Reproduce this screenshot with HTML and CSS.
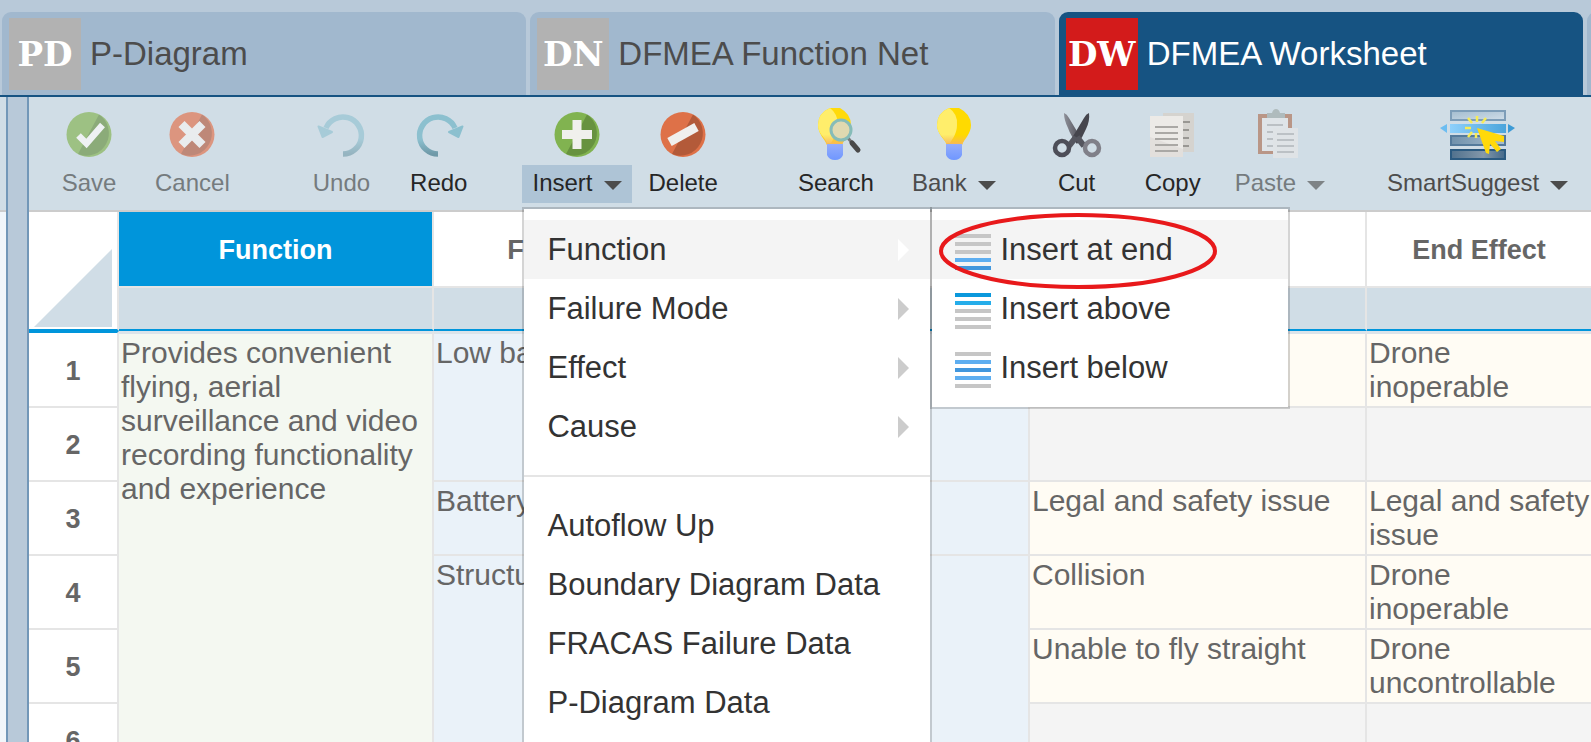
FILE: index.html
```html
<!DOCTYPE html>
<html lang="en">
<head>
<meta charset="utf-8">
<title>DFMEA Worksheet</title>
<link rel="stylesheet" href="styles.css">
</head>
<body>
<svg class="defs" width="0" height="0" aria-hidden="true">
  <defs>
    <linearGradient id="bulb" x1="0" y1="0" x2="1" y2="0"><stop offset="0" stop-color="#ffe94d"/><stop offset="1" stop-color="#ffd400"/></linearGradient>
    <linearGradient id="bulbFade" x1="0" y1="0" x2="0" y2="1"><stop offset=".72" stop-color="#f7b955" stop-opacity="0"/><stop offset="1" stop-color="#f7b560"/></linearGradient>
    <linearGradient id="base" x1="0" y1="0" x2="0" y2="1"><stop offset="0" stop-color="#95adfb"/><stop offset="1" stop-color="#6f97ff"/></linearGradient>
    <linearGradient id="arc" x1="0" y1="0" x2="0" y2="1"><stop offset=".6" stop-color="#8cc0cf"/><stop offset="1" stop-color="#6f99a8"/></linearGradient>
    <linearGradient id="blade" x1="0" y1="0" x2="1" y2="0"><stop offset="0" stop-color="#8e9099"/><stop offset="1" stop-color="#4c4c55"/></linearGradient>
    <linearGradient id="bar1" x1="0" y1="0" x2="1" y2="1"><stop offset="0" stop-color="#a3bccf"/><stop offset="1" stop-color="#cfdde8"/></linearGradient>
    <linearGradient id="bar2" x1="0" y1="0" x2="1" y2="0"><stop offset="0" stop-color="#8ed0fb"/><stop offset="1" stop-color="#4ba5dc"/></linearGradient>
    <linearGradient id="bar3" x1="0" y1="0" x2="1" y2="0"><stop offset="0" stop-color="#6f90ab"/><stop offset="1" stop-color="#a9bfd0"/></linearGradient>
    <linearGradient id="bar4" x1="0" y1="0" x2="1" y2="0"><stop offset="0" stop-color="#50718d"/><stop offset=".6" stop-color="#8398aa"/><stop offset="1" stop-color="#44698a"/></linearGradient>
  </defs>
</svg>
<div class="app">
  <nav class="tabs">
    <a class="tab" href="#pd"><span class="badge">PD</span>P-Diagram</a>
    <a class="tab" href="#dn"><span class="badge">DN</span>DFMEA Function Net</a>
    <a class="tab current" href="#dw"><span class="badge">DW</span>DFMEA Worksheet</a>
    <span class="tab"></span>
  </nav>

  <div class="body">
    <aside class="side"><div class="side-bar"></div></aside>
    <div class="splitter"></div>
    <main class="main">
      <div class="toolbar">
        <div class="group">
          <button class="tool disabled">
            <svg class="icon" viewBox="0 0 76 56"><circle cx="38" cy="28.500" r="22.500" fill="#9dc183"/><path d="M48 8.500A22.500 22.500 0 0 1 27 48Z" fill="#8bab79"/><path d="M27.500 29.500l8 8 16-18.500" fill="none" stroke="#eef1f3" stroke-width="6.500"/></svg>
            <span class="label">Save</span>
          </button>
          <button class="tool disabled">
            <svg class="icon" viewBox="0 0 76 56"><circle cx="38" cy="28.500" r="22.500" fill="#dc957f"/><path d="M48 8.500A22.500 22.500 0 0 1 27 48Z" fill="#be8878"/><path d="M27.500 18l21 21m0-21l-21 21" stroke="#e9ecee" stroke-width="8.500"/></svg>
            <span class="label">Cancel</span>
          </button>
        </div>
        <div class="group history">
          <button class="tool disabled">
            <svg class="icon" viewBox="0 0 76 56" opacity=".6"><g transform="matrix(-1 0 0 1 77 0)"><path d="M37 48A18.500 18.500 0 1 1 54 22" fill="none" stroke="url(#arc)" stroke-width="5.500"/><path d="M48 26L61.500 20.500 57.500 31Z" fill="#8cc0cf" stroke="#8cc0cf" stroke-width="2" stroke-linejoin="round"/></g></svg>
            <span class="label">Undo</span>
          </button>
          <button class="tool">
            <svg class="icon" viewBox="0 0 76 56"><path d="M37 48A18.500 18.500 0 1 1 54 22" fill="none" stroke="url(#arc)" stroke-width="5.500"/><path d="M48 26L61.500 20.500 57.500 31Z" fill="#8cc0cf" stroke="#8cc0cf" stroke-width="2" stroke-linejoin="round"/></svg>
            <span class="label">Redo</span>
          </button>
        </div>
        <div class="group edit">
          <div class="dropdown">
            <button class="tool open" aria-expanded="true">
              <svg class="icon" viewBox="0 0 76 56"><circle cx="38" cy="28.500" r="22.500" fill="#81b350"/><path d="M48 8.500A22.500 22.500 0 0 1 27 48Z" fill="#67923f"/><path d="M38 14v29M23 28.500h30" stroke="#f0f0ec" stroke-width="9"/></svg>
              <span class="label">Insert<i class="caret"></i></span>
            </button>
            <div class="menu">
              <button class="item hover">Function<i class="arrow"></i></button>
              <button class="item">Failure Mode<i class="arrow"></i></button>
              <button class="item">Effect<i class="arrow"></i></button>
              <button class="item">Cause<i class="arrow"></i></button>
              <hr class="rule">
              <button class="item">Autoflow Up</button>
              <button class="item">Boundary Diagram Data</button>
              <button class="item">FRACAS Failure Data</button>
              <button class="item">P-Diagram Data</button>
              <div class="submenu">
                <button class="item hover"><span class="rows"><i class="g"></i><i class="g"></i><i class="g"></i><i class="b"></i><i class="m"></i></span>Insert at end</button>
                <button class="item"><span class="rows"><i class="d"></i><i class="c"></i><i class="g"></i><i class="g"></i><i class="g"></i></span>Insert above</button>
                <button class="item"><span class="rows"><i class="g"></i><i class="b"></i><i class="m"></i><i class="b"></i><i class="g"></i></span>Insert below</button>
                <svg class="ring" viewBox="0 0 280 78" aria-hidden="true"><ellipse cx="140" cy="39" rx="137" ry="36" fill="none" stroke="#e8191b" stroke-width="4"/></svg>
              </div>
            </div>
          </div>
          <button class="tool">
            <svg class="icon" viewBox="0 0 76 56"><circle cx="38" cy="28.500" r="22.500" fill="#de7148"/><path d="M48 8.500A22.500 22.500 0 0 1 27 48Z" fill="#b35a39"/><path d="M24.500 36l27-15" stroke="#f0efed" stroke-width="9"/></svg>
            <span class="label">Delete</span>
          </button>
        </div>
        <div class="group find">
          <button class="tool">
            <svg class="icon" viewBox="0 0 76 56"><path d="M32 2h10q11 6 11 17c0 9-7 14-9 20H29c-2-6-9-11-9-20Q20 7 32 2Z" fill="#ffda0a"/><path d="M32 2q8 6 8 17c0 9-5 14-7 18h-4c-2-6-9-9-9-18Q20 7 32 2Z" fill="#ffee6b"/><path d="M32 2h10q11 6 11 17c0 9-7 14-9 20H29c-2-6-9-11-9-20Q20 7 32 2Z" fill="url(#bulbFade)"/><path d="M29 38h16v11q-2 5-8 5t-8-5Z" fill="url(#base)"/><path d="M50 32l5 6" stroke="#777" stroke-width="3"/><path d="M54 37l6 7" stroke="#494949" stroke-width="5" stroke-linecap="round"/><circle cx="43" cy="24" r="10" fill="#e0d9b0" stroke="#86bcb8" stroke-width="3"/></svg>
            <span class="label">Search</span>
          </button>
          <button class="tool soft">
            <svg class="icon" viewBox="0 0 76 56"><path d="M33 2h10q12 6 12 17c0 9-7 14-9 20H31c-2-6-10-11-10-20Q21 7 33 2Z" fill="#ffda00"/><path d="M33 2q9 6 8 17c0 9-5 14-7 18h-4c-2-6-9-9-9-18Q21 7 33 2Z" fill="#ffee6b"/><path d="M33 2h10q12 6 12 17c0 9-7 14-9 20H31c-2-6-10-11-10-20Q21 7 33 2Z" fill="url(#bulbFade)"/><path d="M30 38h16v11q-2 5-8 5t-8-5Z" fill="url(#base)"/></svg>
            <span class="label">Bank<i class="caret"></i></span>
          </button>
        </div>
        <div class="group clip">
          <button class="tool">
            <svg class="icon" viewBox="0 0 76 56"><path d="M25 7q3 1 5 5l12 20-4 4q-6-5-9-14-4-8-4-15Z" fill="url(#blade)"/><path d="M50 7q-3 1-5 5L33 32l5 6q6-7 9-15 4-8 3-16Z" fill="#45454d"/><path d="M37 31l-7 9M38 31l7 9" stroke="#55565f" stroke-width="6"/><circle cx="23" cy="42" r="7" fill="none" stroke="#4d4e58" stroke-width="4.500"/><circle cx="53" cy="42" r="7" fill="none" stroke="#808089" stroke-width="4.500"/></svg>
            <span class="label">Cut</span>
          </button>
          <button class="tool">
            <svg class="icon" viewBox="0 0 76 56"><path d="M28 7h31v39H28Z" fill="#d5d3cf"/><path d="M45 16h10M46 24h8M46 32h8M46 40h8" stroke="#999793" stroke-width="2"/><path d="M15 10h33v41H15Z" fill="#eceae7"/><path d="M15 31l33 12v8H15Z" fill="#e2dfdc"/><path d="M20 21h23M20 27h23M20 33h23M20 39h23M20 45h23" stroke="#aaa8a5" stroke-width="2"/></svg>
            <span class="label">Copy</span>
          </button>
          <button class="tool disabled">
            <svg class="icon" viewBox="0 0 76 56"><path d="M16 8h34v40H16Z" fill="#b99687"/><path d="M20 12h26v33H20Z" fill="#dfe4e8"/><path d="M25 10v-3h5q1-4 4-4t4 4h5v5H25Z" fill="#afbbbd"/><path d="M25 19h16M25 26h12M25 33h9M25 40h8" stroke="#bbc0c4" stroke-width="2"/><path d="M31 22h25v30H31Z" fill="#dfe3e6"/><path d="M35 28h17M35 34h17M35 40h17M35 46h17" stroke="#bcc1c5" stroke-width="2"/></svg>
            <span class="label">Paste<i class="caret"></i></span>
          </button>
        </div>
        <div class="group smart">
          <button class="tool soft">
            <svg class="icon" viewBox="0 0 76 56"><path d="M11 5h54v9H11Z" fill="url(#bar1)" stroke="#7d9db8" stroke-width="2"/><path d="M11 30h54v9H11Z" fill="url(#bar3)" stroke="#547a9b" stroke-width="2"/><path d="M11 44h54v9H11Z" fill="url(#bar4)" stroke="#2b5a80" stroke-width="2"/><path d="M10 18h56v9H10Z" fill="url(#bar2)"/><path d="M7 18v9L0 22Z" fill="#6cbdf1"/><path d="M68 18v9l7-5Z" fill="#3d9bd6"/><path d="M37 10v6M28 12l4 5M46 12l-4 5M25 22h6M28 31l4-5M36 27v5" stroke="#f7ec55" stroke-width="2.500"/><path d="M37 22l27 8v6l-9-1 6 8-4 3-7-8-1 10-3-1Z" fill="#ffd90a"/></svg>
            <span class="label">SmartSuggest<i class="caret"></i></span>
          </button>
        </div>
      </div>

      <table class="sheet">
        <colgroup><col class="w-num"><col class="w-main"><col class="w-main"><col class="w-mid"><col class="w-next"><col></colgroup>
        <thead>
          <tr class="heads">
            <th class="corner" rowspan="2"><svg class="triangle" viewBox="0 0 78 78" aria-hidden="true"><path d="M78 0v78H0Z" fill="#d0dde6"/></svg></th>
            <th class="selected">Function</th><th>Failure Mode</th><th></th><th></th><th>End Effect</th>
          </tr>
          <tr class="filters"><td></td><td></td><td></td><td></td><td></td></tr>
        </thead>
        <tbody>
          <tr class="first"><th>1</th><td class="green" rowspan="6">Provides convenient flying, aerial surveillance and video recording functionality and experience</td><td class="blue" rowspan="2">Low battery</td><td class="blue" rowspan="2"></td><td class="cream"></td><td class="cream">Drone inoperable</td></tr>
          <tr><th>2</th><td class="gray"></td><td class="gray"></td></tr>
          <tr><th>3</th><td class="blue">Battery</td><td class="blue"></td><td class="cream">Legal and safety issue</td><td class="cream">Legal and safety issue</td></tr>
          <tr><th>4</th><td class="blue" rowspan="3">Structural</td><td class="blue" rowspan="3"></td><td class="cream">Collision</td><td class="cream">Drone inoperable</td></tr>
          <tr><th>5</th><td class="cream">Unable to fly straight</td><td class="cream">Drone uncontrollable</td></tr>
          <tr><th>6</th><td class="gray"></td><td class="gray"></td></tr>
        </tbody>
      </table>
    </main>
  </div>
</div>
</body>
</html>
```
FILE: styles.css
```css
* { box-sizing: border-box; }
body { margin: 0; font-family: "Liberation Sans", Arial, sans-serif; }
button { font: inherit; color: inherit; background: none; border: 0; padding: 0; text-align: left; }
.defs { position: absolute; }
.app { height: 100vh; overflow: hidden; display: flex; flex-direction: column; background: #b8c9d9; }

.tabs { display: flex; gap: 4px; padding: 12px 0 0 2px; border-bottom: 2px solid #165382; overflow: hidden; flex: none; }
.tab { flex: 0 0 33%; height: 83px; padding: 1px 7px 0; display: flex; align-items: center; gap: 9px; border-radius: 9px 9px 0 0; background: #a1b8ce; color: #4c4c4c; font-size: 33px; text-decoration: none; white-space: nowrap; }
.tab.current { background: #165382; color: #fff; }
.badge { width: 72px; height: 72px; flex: none; display: flex; align-items: center; justify-content: center; background: #b2b2b2; color: #fff; font: bold 34px "DejaVu Serif", serif; }
.current .badge { background: #d31b1b; }

.body { flex: 1; min-height: 0; display: flex; }
.side { width: 6px; background: #f1f6fa; }
.side-bar { height: 115px; background: #d0dde6; border-bottom: 2px solid #ccc; }
.splitter { width: 23px; flex: none; background: #b8c9d9; border: solid #7297b8; border-width: 0 2px; }
.main { flex: 1; min-width: 0; display: flex; flex-direction: column; background: #fff; }

.toolbar { height: 115px; flex: none; display: flex; align-items: flex-start; padding: 9px 0 0 22px; background: #d0dde6; border-bottom: 2px solid #ccc; font-size: 24px; color: #262626; }
.group { display: flex; gap: 18px; }
.history { margin-left: 63px; gap: 20px; }
.edit { margin-left: 45px; gap: 7px; }
.find { margin-left: 60px; }
.clip { margin-left: 27px; gap: 14px; }
.smart { margin-left: 42px; }
.clip .tool:first-child { min-width: 88px; }
.tool { display: flex; flex-direction: column; align-items: center; gap: 3px; }
.icon { width: 76px; height: 56px; display: block; }
.label { height: 38px; padding: 0 10px 2px; display: flex; align-items: center; gap: 11px; white-space: nowrap; }
.disabled { color: #757b7e; }
.soft { color: #4c4c4c; }
.open .label { background: #aec4d6; }
.caret { border: solid transparent; border-width: 9px 9px 0; border-top-color: #4c4c4c; margin-top: 4px; }
.disabled .caret { border-top-color: #7e8386; }

.dropdown { position: relative; }
.menu, .submenu { position: absolute; z-index: 2; background: #fff; background-clip: padding-box; border: 2px solid rgba(0, 0, 0, .17); font-size: 31px; color: #333; }
.menu { top: 101px; left: 0; width: 410px; padding: 11px 0 20px; }
.submenu { top: -2px; left: 100%; width: 360px; padding: 11px 0 10px; }
.item { width: 100%; height: 59px; padding: 0 21px 0 23px; display: flex; align-items: center; white-space: nowrap; }
.item.hover { background: #f4f4f4; }
.menu > .item { justify-content: space-between; }
.arrow { border: solid transparent; border-width: 11px 0 11px 11px; border-left-color: #ccc; }
.hover .arrow { border-left-color: #fff; }
.rule { border: 0; height: 2px; background: #e5e5e5; margin: 19px 0; }
.rows { width: 36px; margin: 4px 9px 0 0; display: flex; flex-direction: column; gap: 4px; }
.rows i { height: 4px; }
.g { background: #c6c6c6; }
.b { background: #5eaef0; }
.m { background: #4297dd; }
.c { background: #25adea; }
.d { background: #0a98dc; }
.ring { position: absolute; left: 6px; top: 3px; width: 280px; height: 78px; pointer-events: none; }

.sheet { width: 100%; table-layout: fixed; border-collapse: separate; border-spacing: 0; color: #666; }
.w-num { width: 90px; }
.w-main { width: 315px; }
.w-mid { width: 281px; }
.w-next { width: 337px; }
.sheet th, .sheet td { padding: 0; border: solid #e5e5e5; border-width: 0 2px 2px 0; }
.sheet tr > :last-child { border-right-width: 0; }
.sheet tbody th { border-right-width: 2px; }
.sheet th { padding-top: 3px; font-size: 27px; }
.heads { height: 76px; }
.sheet th.selected { background: #0095db; color: #fff; }
.sheet th.corner { padding: 0; border-bottom: 2px solid #0095db; vertical-align: bottom; }
.triangle { display: block; width: 78px; height: 78px; margin: 0 0 2px 5px; }
.filters { height: 43px; }
.sheet .filters td { background: #d0dde6; border-bottom-color: #0095db; }
.sheet tbody tr { height: 74px; }
.sheet tbody .first { height: 77px; }
.sheet .first td { border-top: 3px solid #dce4ea; }
.sheet .first th { border-top: 2px solid #0095db; }
.sheet tbody td { padding: 2px 0 0 2px; vertical-align: top; font-size: 30px; line-height: 34px; }
.green { background: #f4f8f1; }
.blue { background: #eaf2f9; }
.cream { background: #fffcf4; }
.gray { background: #f4f4f4; }
```
